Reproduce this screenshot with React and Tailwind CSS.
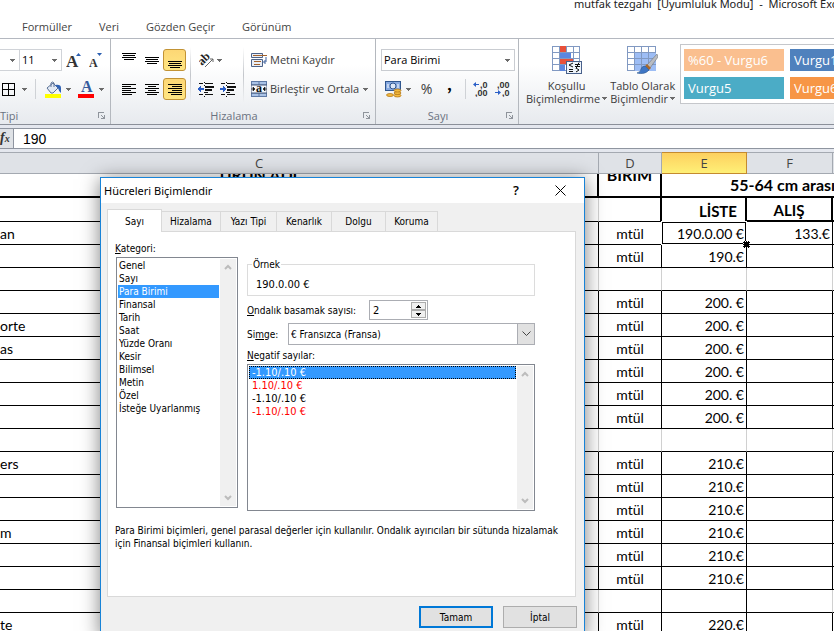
const ROWS = [
  { name: "an", unit: "mtül", list: "190.0.00 €", buy: "133.€", active: true },
  { name: "", unit: "mtül", list: "190.€" },
  { blank: true },
  { name: "", unit: "mtül", list: "200. €" },
  { name: "orte", unit: "mtül", list: "200. €" },
  { name: "as", unit: "mtül", list: "200. €" },
  { name: "", unit: "mtül", list: "200. €" },
  { name: "", unit: "mtül", list: "200. €" },
  { name: "", unit: "mtül", list: "200. €" },
  { blank: true },
  { name: "ers", unit: "mtül", list: "210.€" },
  { name: "", unit: "mtül", list: "210.€" },
  { name: "", unit: "mtül", list: "210.€" },
  { name: "m", unit: "mtül", list: "210.€" },
  { name: "", unit: "mtül", list: "210.€" },
  { name: "", unit: "mtül", list: "210.€" },
  { blank: true, ruled: true },
  { name: "te", unit: "mtül", list: "220.€" },
];

const CATEGORIES = [
  "Genel",
  "Sayı",
  "Para Birimi",
  "Finansal",
  "Tarih",
  "Saat",
  "Yüzde Oranı",
  "Kesir",
  "Bilimsel",
  "Metin",
  "Özel",
  "İsteğe Uyarlanmış",
];

/* ---------- Icons ---------- */

function Caret({ className = "" }) {
  return (
    <svg className={`shrink-0 ${className}`} width="5" height="3" viewBox="0 0 5 3" shapeRendering="crispEdges" fill="#6b6b6b">
      <path d="M0 0h5v1H0zM1 1h3v1H1zM2 2h1v1H2z" />
    </svg>
  );
}

// Each line is [x, width]
function LinesIcon({ lines, step = 2 }) {
  return (
    <svg width="14" height={lines.length * step - step + 1} shapeRendering="crispEdges" fill="#000">
      {lines.map(([x, w], i) => (
        <rect key={i} x={x} y={i * step} width={w} height="1" />
      ))}
    </svg>
  );
}

const VERTICAL = [[0, 14], [1, 12], [0, 14], [2, 10]];
const LEFT = [[0, 14], [0, 9], [0, 14], [0, 9], [0, 14], [0, 10]];
const CENTER = [[0, 14], [3, 8], [0, 14], [3, 8], [0, 14], [2, 10]];
const RIGHT = [[0, 14], [4, 10], [0, 14], [4, 10], [0, 14], [3, 11]];

function IndentIcon({ increase }) {
  return (
    <svg width="16" height="15" shapeRendering="crispEdges">
      <path d="M1 1h4v1H1zM7 1h8v1H7zM1 12h4v1H1zM7 12h8v1H7zM7 4h9v2H7zM7 7h7v2H7zM7 10h3v1H7zM6 0h1v1H6zM6 3h1v1H6zM6 10h1v1H6zM6 14h1v1H6z" fill="#111" />
      {increase ? (
        <path d="M0 6h3V3l3 4-3 4V8H0z" fill="#2b5fc7" />
      ) : (
        <path d="M6 6H3V3L0 7l3 4V8h3z" fill="#2b5fc7" />
      )}
    </svg>
  );
}

function OrientationIcon() {
  return (
    <svg width="16" height="15" viewBox="0 0 16 15">
      <text x="0" y="10" transform="rotate(-45 5 8)" fontFamily="Liberation Serif, serif" fontWeight="bold" fontSize="12" fill="#222">ab</text>
      <path d="M6 14L14 6M14 9V6h-3" stroke="#666" fill="none" />
    </svg>
  );
}

function BordersIcon() {
  return (
    <svg width="13" height="13" shapeRendering="crispEdges">
      <path d="M.5.5h12v12H.5zM6.500 0v13M0 6.500h13" fill="none" stroke="#000" />
    </svg>
  );
}

function FillIcon() {
  return (
    <svg width="17" height="17" viewBox="0 0 17 17">
      <path d="M2 7l6-5 5 5-5 5H6z" fill="#e3eaf5" stroke="#5a7196" />
      <path d="M6 6V2q1.500-2 3 0v4" fill="none" stroke="#5a7196" />
      <path d="M10 4q6-1 6 3v5q-2-1-3-5z" fill="#2f62b5" />
      <rect y="13" width="16" height="4" fill="#ff0" />
    </svg>
  );
}

function FontColorIcon() {
  return (
    <svg width="17" height="17" viewBox="0 0 17 17">
      <text x="3" y="11" fontFamily="Liberation Serif, serif" fontWeight="bold" fontSize="16" fill="#355b9c">A</text>
      <rect y="13" width="16" height="4" fill="#f00" />
    </svg>
  );
}

function FontSizeIcon({ grow }) {
  return (
    <svg width="15" height="16" viewBox="0 0 15 16">
      <text x="0" y="15" fontFamily="Liberation Serif, serif" fontWeight="bold" fontSize={grow ? 17 : 12} fill="#333">A</text>
      {grow ? <path d="M10 4l2.500-3L15 4z" fill="#2b5fb0" /> : <path d="M8 1h5l-2.500 3z" fill="#2b5fb0" />}
    </svg>
  );
}

function WrapIcon() {
  return (
    <svg width="16" height="16" viewBox="0 0 16 16">
      <path d="M.5 1.500h11v4H.500zM.5 7.500h11v7H.500z" fill="#e9eef6" stroke="#4c6288" />
      <path d="M2 3.500h14" stroke="#a2622c" />
      <path d="M3 9.500h7M3 12.500h6" stroke="#a2622c" />
      <path d="M15 5v5h-2M14.500 8l-2 2 2 2" stroke="#3a5f9d" fill="none" />
    </svg>
  );
}

function MergeIcon() {
  return (
    <svg width="16" height="16" viewBox="0 0 16 16">
      <rect x=".5" y=".5" width="15" height="15" fill="#a9c2e6" stroke="#5f7aa6" />
      <path d="M8 0v4M8 12v4M0 4h16M0 12h16" stroke="#5f7aa6" />
      <rect y="4" width="16" height="8" fill="#f4f7fc" stroke="#44597d" />
      <path d="M0 8h3M13 8h3M2 6l2 2-2 2zM14 6l-2 2 2 2z" stroke="#111" fill="#111" strokeWidth=".6" />
      <text x="5" y="11" fontFamily="Liberation Serif, serif" fontWeight="bold" fontSize="12" fill="#111">a</text>
    </svg>
  );
}

function MoneyIcon() {
  return (
    <svg width="17" height="17" viewBox="0 0 17 17">
      <rect x=".5" y=".5" width="15" height="9" fill="#86a9e0" stroke="#2f568f" />
      <ellipse cx="8" cy="5" rx="3" ry="3" fill="#dde8f8" stroke="#2f568f" />
      <path d="M3 3v4M13 3v4" stroke="#fff" />
      <g fill="#f5bb3d" stroke="#a86c12" strokeWidth=".7">
        <ellipse cx="12.500" cy="14.500" rx="3.500" ry="1.500" />
        <ellipse cx="12.500" cy="12" rx="3.500" ry="1.500" />
        <ellipse cx="12.500" cy="9.500" rx="3.500" ry="1.500" />
        <ellipse cx="5" cy="14" rx="3.500" ry="1.500" />
      </g>
    </svg>
  );
}

function DecimalIcon({ increase }) {
  return (
    <svg width="16" height="16" viewBox="0 0 16 16" fontFamily="Liberation Sans, sans-serif" fontSize="9" fontWeight="bold" fill="#333">
      <text x={increase ? 7 : 2} y="7">{increase ? ",0" : ",00"}</text>
      <text x={increase ? 2 : 7} y="15">{increase ? ",00" : ",0"}</text>
      {increase ? (
        <path d="M6 3H3V1L0 3.500 3 6V4h3z" fill="#2b5fc7" />
      ) : (
        <path d="M0 11h3V9l3 2.500L3 14v-2H0z" fill="#2b5fc7" />
      )}
    </svg>
  );
}

function ConditionalIcon() {
  return (
    <svg width="30" height="28" viewBox="0 0 30 28" shapeRendering="crispEdges">
      <rect x=".5" y=".5" width="27" height="24" fill="#fff" stroke="#8199c2" />
      <path d="M7.500 0v25M14.500 0v25M21.500 0v25M0 6.500h28M0 12.500h28M0 18.500h28" stroke="#8199c2" />
      <rect x="8" y="0" width="6" height="6" fill="#e8503a" />
      <rect x="8" y="7" width="11" height="5" fill="#5b86e0" />
      <rect x="8" y="13" width="13" height="5" fill="#e8503a" />
      <rect x="8" y="19" width="5" height="6" fill="#5b86e0" />
      <rect x="14.500" y="15.500" width="15" height="12" fill="#eef4fb" stroke="#49618b" />
      <g stroke="#111" fill="none" shapeRendering="auto">
        <path d="M21 17l-4 2 4 2M17 23.500h4M17 25.500h4" />
        <path d="M23 18.500h5M23 20.500h5M27 16.500l-3 6M24 22l3 2-3 2" />
      </g>
    </svg>
  );
}

function TableStyleIcon() {
  return (
    <svg width="31" height="29" viewBox="0 0 31 29">
      <g shapeRendering="crispEdges">
        <rect x=".5" y=".5" width="28" height="24" fill="#fff" stroke="#8199c2" />
        <rect x="8" y="7" width="21" height="18" fill="#9dbdf5" />
        <path d="M7.500 0v25M14.500 0v25M21.500 0v25M0 6.500h29M0 12.500h29M0 18.500h29" stroke="#8199c2" />
      </g>
      <path d="M30 8L20 19l3 3 8-11z" fill="#b9bcc2" stroke="#6f7378" strokeWidth=".6" />
      <path d="M20 18l4 4-2 2-4-4z" fill="#a7682d" />
      <path d="M18 20l4 4q-4 5-12 3 4-1 4-4 1-3 4-3z" fill="#3f76c4" stroke="#2a568f" strokeWidth=".6" />
    </svg>
  );
}

function ScrollArrow({ down }) {
  return (
    <svg width="8" height="6" viewBox="0 0 8 6" fill="none" stroke="#bcbcbc" strokeWidth="2">
      <path d={down ? "M1 1l3 3 3-3" : "M1 5l3-3 3 3"} />
    </svg>
  );
}

/* ---------- Ribbon ---------- */

function ToolButton({ label, active, className = "w-[23px]", children }) {
  const look = active ? "border border-[#c29335] bg-linear-to-b from-[#fdd775] to-[#ffe683]" : "";
  return (
    <button aria-label={label} className={`flex h-[22px] items-center justify-center rounded-[3px] ${look} ${className}`}>
      {children}
    </button>
  );
}

function Divider() {
  return <span className="h-14 w-px shrink-0 bg-linear-to-b from-transparent via-[#c3c6cb] to-transparent" />;
}

function Group({ title, align = "justify-center", className, children }) {
  return (
    <section className={`flex shrink-0 flex-col border-r border-[#b4b8be] pt-[10px] ${className}`}>
      <div className="flex h-[51px] items-center">{children}</div>
      <div className={`relative mt-2 flex whitespace-nowrap text-[11px] leading-4 text-[#6a7280] ${align}`}>
        {title}
        <button aria-label={`${title} ayarları`} className="absolute right-[5px] top-1">
          <svg width="7" height="7" shapeRendering="crispEdges" fill="none" stroke="#8f949b">
            <path d="M0 .5h6M.5 0v6M3 3l3 3M3 6.500h4M6.500 3v4" />
          </svg>
        </button>
      </div>
    </section>
  );
}

function Ribbon() {
  return (
    <div className="flex h-[86px] overflow-hidden border-b border-[#8b9099] bg-linear-to-b from-white from-30% to-[#e7eaee] text-[11px] text-[#3b3b3b]">
      <Group title="Tipi" align="justify-start" className="w-[111px]">
        <div className="flex flex-col gap-[7px]">
          <div className="flex h-[22px] items-center">
            <button aria-label="Yazı tipi" className="flex h-[22px] w-5 items-center justify-end border border-l-0 border-[#d0d3d8] bg-white pr-1">
              <Caret />
            </button>
            <button aria-label="Yazı tipi boyutu" className="flex h-[22px] w-[42px] items-center justify-between border border-l-0 border-[#d0d3d8] bg-white pl-[2px] pr-1 text-black">
              11
              <Caret />
            </button>
            <ToolButton label="Büyüt"><FontSizeIcon grow /></ToolButton>
            <ToolButton label="Küçült"><FontSizeIcon /></ToolButton>
          </div>
          <div className="flex h-[22px] items-center">
            <ToolButton label="Kenarlıklar" className="w-[29px] gap-[7px]"><BordersIcon /><Caret /></ToolButton>
            <span className="ml-[6px] mr-1 h-5 w-px bg-[#cfd2d6]" />
            <ToolButton label="Dolgu rengi" className="w-[36px] gap-1"><FillIcon /><Caret /></ToolButton>
            <ToolButton label="Yazı tipi rengi" className="w-[29px] gap-1"><FontColorIcon /><Caret /></ToolButton>
          </div>
        </div>
      </Group>

      <Group title="Hizalama" align="justify-center pr-[18px]" className="w-[265px]">
        <div className="ml-[6px] mr-1 grid grid-cols-3 gap-y-[7px]">
          <ToolButton label="Üste hizala"><span className="pb-2"><LinesIcon lines={VERTICAL} /></span></ToolButton>
          <ToolButton label="Ortaya hizala"><LinesIcon lines={VERTICAL} /></ToolButton>
          <ToolButton label="Alta hizala" active><span className="pt-2"><LinesIcon lines={VERTICAL} /></span></ToolButton>
          <ToolButton label="Sola hizala"><LinesIcon lines={LEFT} /></ToolButton>
          <ToolButton label="Ortala"><LinesIcon lines={CENTER} /></ToolButton>
          <ToolButton label="Sağa hizala" active><LinesIcon lines={RIGHT} /></ToolButton>
        </div>
        <Divider />
        <div className="mx-1 flex flex-col gap-[7px]">
          <ToolButton label="Yönlendirme" className="w-[30px] gap-[2px]"><OrientationIcon /><Caret /></ToolButton>
          <div className="flex">
            <ToolButton label="Girintiyi azalt" className="w-[22px]"><IndentIcon /></ToolButton>
            <ToolButton label="Girintiyi artır" className="w-[22px]"><IndentIcon increase /></ToolButton>
          </div>
        </div>
        <Divider />
        <div className="ml-[7px] flex flex-col items-start gap-[7px] whitespace-nowrap">
          <button className="flex h-[22px] items-center gap-[3px]"><WrapIcon />Metni Kaydır</button>
          <button className="flex h-[22px] items-center gap-[3px]"><MergeIcon />Birleştir ve Ortala<Caret className="ml-[1px]" /></button>
        </div>
      </Group>

      <Group title="Sayı" align="justify-center pr-[18px]" className="w-[143px]">
        <div className="ml-[5px] flex flex-col gap-[7px]">
          <button aria-label="Sayı biçimi" className="flex h-[22px] w-[134px] items-center justify-between border border-[#c9ccd1] bg-white pl-[2px] pr-1 text-black">
            Para Birimi
            <Caret />
          </button>
          <div className="flex h-[22px] items-center">
            <ToolButton label="Finansal sayı biçimi" className="w-[34px] gap-1"><MoneyIcon /><Caret /></ToolButton>
            <ToolButton label="Yüzde" className="w-[23px] text-sm">%</ToolButton>
            <ToolButton label="Virgül" className="w-[23px] pb-2 font-serif text-xl font-bold text-black">,</ToolButton>
            <span className="mx-1 h-5 w-px bg-[#cfd2d6]" />
            <ToolButton label="Ondalık artır" className="w-[22px]"><DecimalIcon increase /></ToolButton>
            <ToolButton label="Ondalık azalt" className="w-[22px]"><DecimalIcon /></ToolButton>
          </div>
        </div>
      </Group>

      <section className="flex min-w-0 flex-1 items-start overflow-hidden pl-[7px]">
        <button className="flex shrink-0 flex-col items-center whitespace-nowrap pt-[7px] leading-[13px]">
          <ConditionalIcon />
          <span className="pt-[5px]">Koşullu</span>
          <span className="flex items-center gap-[2px]">Biçimlendirme<Caret /></span>
        </button>
        <button className="ml-[3px] flex shrink-0 flex-col items-center whitespace-nowrap pt-[7px] leading-[13px]">
          <TableStyleIcon />
          <span className="pt-1">Tablo Olarak</span>
          <span className="flex items-center gap-[2px]">Biçimlendir<Caret /></span>
        </button>
        <div className="ml-auto mt-[5px] w-[154px] shrink-0 overflow-hidden border border-r-0 border-[#c5c7cb] bg-white py-1 pl-[3px]">
          <div className="grid grid-cols-[100px_100px] gap-[6px] text-[13px] leading-[22px] text-white">
            <button className="bg-[#fabf8f] pl-1 text-left">%60 - Vurgu6</button>
            <button className="bg-[#4f81bd] pl-1 text-left">Vurgu1</button>
            <button className="bg-[#4bacc6] pl-1 text-left">Vurgu5</button>
            <button className="bg-[#f79646] pl-1 text-left">Vurgu6</button>
          </div>
        </div>
      </section>
    </div>
  );
}

/* ---------- Sheet ---------- */

function Sheet() {
  return (
    <table className="w-full table-fixed border-separate border-spacing-0 whitespace-nowrap font-[Lato,sans-serif] text-sm leading-5 text-black">
      <colgroup>
        <col />
        <col className="w-[63px]" />
        <col className="w-[85px]" />
        <col className="w-[86px]" />
        <col className="w-px" />
      </colgroup>
      <thead className="font-['Open_Sans',sans-serif] text-[13px] leading-5 text-[#444]">
        <tr className="bg-[#dfe2e7]">
          <th className="h-[22px] border-y border-r border-[#a4a9b1] pr-[80px] font-normal">C</th>
          <th className="border-y border-r border-[#a4a9b1] p-0 font-normal">D</th>
          <th className="border-y border-r border-[#c48a2f] bg-linear-to-b from-[#fdd05f] to-[#fef077] p-0 font-normal">E</th>
          <th className="border-y border-r border-[#a4a9b1] p-0 font-normal">F</th>
          <th className="border-y border-[#a4a9b1] p-0"></th>
        </tr>
      </thead>
      <tbody>
        <tr className="text-base leading-5 font-bold">
          <td className="h-6 border-b-2 border-r-2 border-black p-0 pr-[80px] text-center">
            <div className="flex h-[22px] items-end justify-center overflow-hidden pb-[11px]">ÜRÜN ADI</div>
          </td>
          <td className="border-b-2 border-r-2 border-black p-0">
            <div className="flex h-[22px] items-end justify-center overflow-hidden pb-[11px]">BİRİM</div>
          </td>
          <td colSpan={3} className="overflow-hidden border-b-2 border-black p-0 pl-[68px]">55-64 cm arası</td>
        </tr>
        <tr className="text-[15px] leading-5 font-bold">
          <td className="h-6 border-b border-r border-b-black border-r-[#d0d0d0] p-0"></td>
          <td className="border-b border-r-2 border-black p-0"></td>
          <td className="border-b border-r-2 border-black p-0 pr-2 pt-[2px] text-right">LİSTE</td>
          <td className="border-b-2 border-r-2 border-black p-0 pt-[2px] text-center">ALIŞ</td>
          <td className="border-b-2 border-black p-0"></td>
        </tr>
        {ROWS.map((row, i) => {
          const edge = row.blank ? "border-r-[#d0d0d0]" : "border-r-black";
          const inner = row.blank && !row.ruled ? "border-r-[#d0d0d0]" : "border-r-black";
          return (
            <tr key={i}>
              <td className={`h-[23px] border-b border-r border-b-black p-0 pt-[2px] ${edge}`}>{row.name}</td>
              <td className={`border-b border-r border-b-black p-0 pt-[2px] text-center ${inner}`}>{row.unit}</td>
              <td className={`relative border-b border-r border-b-black p-0 pr-[2px] pt-[2px] text-right ${inner}`}>
                {row.list}
                {row.active && (
                  <>
                    <span className="absolute inset-0 border border-black outline outline-white" />
                    <span className="absolute -bottom-[4px] -right-[4px] size-[7px] border border-dotted border-white bg-black" />
                  </>
                )}
              </td>
              <td className={`border-b border-r border-b-black p-0 pr-[2px] pt-[2px] text-right ${edge}`}>{row.buy}</td>
              <td className="border-b border-black p-0"></td>
            </tr>
          );
        })}
      </tbody>
    </table>
  );
}

/* ---------- Format cells dialog ---------- */

function ScrollBar() {
  return (
    <div className="flex w-4 shrink-0 flex-col items-center justify-between bg-[#f0f0f0] py-[5px]">
      <button aria-label="Yukarı"><ScrollArrow /></button>
      <button aria-label="Aşağı"><ScrollArrow down /></button>
    </div>
  );
}

function FormatDialog() {
  return (
    <div
      role="dialog"
      aria-labelledby="dialog-title"
      className="absolute left-[100px] top-[177px] w-[485px] border border-[#1883d7] bg-[#f0f0f0] pb-2 font-['DejaVu_Sans_Condensed','DejaVu_Sans',sans-serif] text-[10px] leading-[13px] text-black shadow-[0_2px_18px_rgba(0,0,0,0.5)]"
    >
      <div className="flex h-[25px] items-center bg-white pl-[3px] pr-[18px]">
        <h2 id="dialog-title" className="flex-1 font-['Noto_Sans',sans-serif] text-[11px]">Hücreleri Biçimlendir</h2>
        <button aria-label="Yardım" className="mr-[36px] font-['Open_Sans',sans-serif] text-[13px] font-semibold">?</button>
        <button aria-label="Kapat">
          <svg width="11" height="11" viewBox="0 0 11 11" stroke="#000"><path d="M.5.5l10 10M10.500.5l-10 10" /></svg>
        </button>
      </div>

      <div role="tablist" className="flex items-end px-[6px] pt-[6px]">
        <button role="tab" aria-selected="true" className="relative -mb-px h-[23px] w-[55px] border border-b-0 border-[#d9d9d9] bg-white">Sayı</button>
        <button role="tab" className="h-5 w-[59px] border border-b-0 border-l-0 border-[#d9d9d9]">Hizalama</button>
        <button role="tab" className="h-5 w-[56px] border border-b-0 border-l-0 border-[#d9d9d9]">Yazı Tipi</button>
        <button role="tab" className="h-5 w-[55px] border border-b-0 border-l-0 border-[#d9d9d9]">Kenarlık</button>
        <button role="tab" className="h-5 w-[54px] border border-b-0 border-l-0 border-[#d9d9d9]">Dolgu</button>
        <button role="tab" className="h-5 w-[52px] border border-b-0 border-l-0 border-[#d9d9d9]">Koruma</button>
      </div>

      <div className="ml-[6px] mr-2 border border-[#d9d9d9] bg-white px-[7px] pb-[46px] pt-[10px]">
        <div className="flex gap-[9px]">
          <div className="w-[123px]">
            <h3 id="category-label"><u>K</u>ategori:</h3>
            <div className="ml-px mt-[2px] flex h-[251px] border border-[#828790] p-px">
              <ul role="listbox" aria-labelledby="category-label" className="flex-1">
                {CATEGORIES.map((name) => (
                  <li
                    key={name}
                    role="option"
                    aria-selected={name === "Para Birimi"}
                    className="mr-px whitespace-nowrap pl-px aria-selected:bg-[#3399ff] aria-selected:text-white"
                  >
                    {name}
                  </li>
                ))}
              </ul>
              <ScrollBar />
            </div>
          </div>

          <div className="w-[288px] pt-4">
            <fieldset className="h-[38px] border border-[#dcdcdc] px-2">
              <legend className="-ml-1 px-px">Örnek</legend>
              <p className="pt-[7px] text-[11px]">190.0.00 €</p>
            </fieldset>
            <div className="mt-1 flex items-center gap-2">
              <label htmlFor="decimals" className="w-[114px] whitespace-nowrap"><u>O</u>ndalık basamak sayısı:</label>
              <div className="flex h-5 w-[59px] border border-[#abadb3] p-px">
                <input id="decimals" defaultValue="2" className="w-0 flex-1 pl-[2px] text-[11px] outline-none" />
                <div className="flex w-[15px] flex-col">
                  <button aria-label="Artır" className="flex flex-1 items-center justify-center border border-[#acacac] bg-[#f0f0f0]">
                    <svg width="5" height="3" fill="#000" shapeRendering="crispEdges"><path d="M2 0h1v1H2zM1 1h3v1H1zM0 2h5v1H0z" /></svg>
                  </button>
                  <button aria-label="Azalt" className="flex flex-1 items-center justify-center border border-[#acacac] bg-[#f0f0f0]">
                    <svg width="5" height="3" fill="#000" shapeRendering="crispEdges"><path d="M0 0h5v1H0zM1 1h3v1H1zM2 2h1v1H2z" /></svg>
                  </button>
                </div>
              </div>
            </div>
            <div className="mt-[3px] flex items-center">
              <label htmlFor="symbol" className="w-[41px]">Si<u>m</u>ge:</label>
              <div className="relative flex-1">
                <select id="symbol" className="block h-[22px] w-full appearance-none border border-[#abadb3] bg-white pl-[2px]">
                  <option>€ Fransızca (Fransa)</option>
                </select>
                <span className="pointer-events-none absolute inset-y-0 right-0 flex w-[18px] items-center justify-center border border-[#abadb3] bg-[#e1e1e1]">
                  <svg width="9" height="6" fill="none" stroke="#444"><path d="M.5.5l4 4 4-4" /></svg>
                </span>
              </div>
            </div>
            <h3 id="negative-label" className="mt-[4px]"><u>N</u>egatif sayılar:</h3>
            <div className="mt-[2px] flex h-[147px] border border-[#828790] p-px">
              <ul role="listbox" aria-labelledby="negative-label" className="flex-1 text-[11px]">
                <li role="option" aria-selected="true" className="mr-px bg-[#3399ff] pl-[3px] text-white outline-1 -outline-offset-1 outline-dotted outline-black">-1.10/.10 €</li>
                <li role="option" className="pl-[3px] text-[#f00]">1.10/.10 €</li>
                <li role="option" className="pl-[3px]">-1.10/.10 €</li>
                <li role="option" className="pl-[3px] text-[#f00]">-1.10/.10 €</li>
              </ul>
              <ScrollBar />
            </div>
          </div>
        </div>
        <p className="mt-[13px]">
          Para Birimi biçimleri, genel parasal değerler için kullanılır. Ondalık ayırıcıları bir sütunda hizalamak için Finansal biçimleri kullanın.
        </p>
      </div>

      <div className="mt-[9px] flex justify-end gap-[10px] pr-[7px]">
        <button className="h-[22px] w-[74px] border-2 border-[#0078d7] bg-[#e1e1e1]">Tamam</button>
        <button className="h-[22px] w-[74px] border border-[#adadad] bg-[#e1e1e1]">İptal</button>
      </div>
    </div>
  );
}

export default function App() {
  return (
    <div className="relative h-screen overflow-hidden bg-white font-['Open_Sans',sans-serif]">
      {/* Window title */}
      <header className="flex h-[14px] items-end justify-end overflow-hidden">
        <h1 className="w-[260px] whitespace-pre pb-[2px] font-['Noto_Sans',sans-serif] text-[11px] leading-4 text-[#222]">mutfak tezgahı  [Uyumluluk Modu]  -  Microsoft Excel</h1>
      </header>

      {/* Ribbon tabs */}
      <nav className="flex h-[25px] items-center gap-[27px] border-b border-[#b4b8c0] pl-[22px] pt-[2px] text-[11px] text-[#444]">
        <button>Formüller</button>
        <button>Veri</button>
        <button>Gözden Geçir</button>
        <button>Görünüm</button>
      </nav>

      <Ribbon />

      {/* Formula bar */}
      <div className="bg-[#e4e7ee] py-[3px]">
        <div className="flex h-[21px] border-y border-[#8f95a0] bg-white">
          <span className="w-[14px] shrink-0 overflow-hidden border-r border-[#8f95a0] bg-[#dfe2e6] font-['Liberation_Serif',serif] text-sm font-bold italic leading-[18px] text-[#333]">
            f<span className="text-[10px]">x</span>
          </span>
          <input aria-label="Formül çubuğu" defaultValue="190" className="min-w-0 flex-1 pl-[9px] font-['Liberation_Sans',sans-serif] text-sm text-black outline-none" />
        </div>
      </div>

      <Sheet />
      <FormatDialog />
    </div>
  );
}
